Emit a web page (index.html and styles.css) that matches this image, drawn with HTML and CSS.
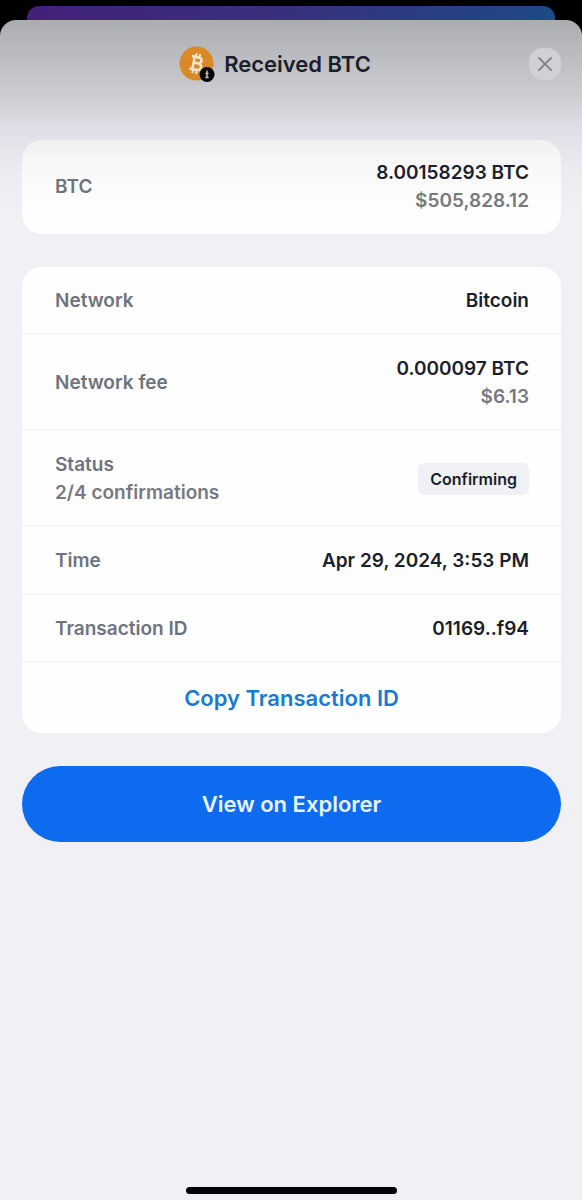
FILE: index.html
```html
<!DOCTYPE html>
<html lang="en">
<head>
<meta charset="utf-8">
<meta name="viewport" content="width=device-width, initial-scale=1">
<title>Received BTC</title>
<link rel="stylesheet" href="styles.css">
</head>
<body>
<div class="backdrop" aria-hidden="true"></div>
<main class="sheet">
  <header class="header">
    <div class="title">
      <svg class="coin" viewBox="0 0 36 36" aria-hidden="true">
        <circle cx="17.5" cy="17.5" r="17" fill="#d98a27"/>
        <g transform="rotate(12 17.5 17.5)" fill="none" stroke="#efe4cc" stroke-width="2.6">
          <path d="M14.5 11v13M11.5 11.2h7c4.600 0 4.600 5.800 0 5.800h-4M18.500 17c5.600 0 5.600 6.800 0 6.800h-7"/>
          <path d="M15.500 7.500v4M19.200 7.500v4M15.500 24v3.800M19.200 24v3.800" stroke-width="2"/>
        </g>
        <circle cx="28" cy="28.500" r="7.500" fill="#050608"/>
        <path d="M28 24.500v7M26.500 27.500h3M26.300 31.500h3.400" fill="none" stroke="#c9c9cb" stroke-width="1.400"/>
      </svg>
      <h1 class="title-text">Received BTC</h1>
    </div>
    <button class="close" type="button" aria-label="Close">
      <svg class="close-icon" viewBox="0 0 14 14" aria-hidden="true"><path d="M1 1l12 12M13 1L1 13"/></svg>
    </button>
  </header>

  <dl class="card card-amount">
    <div class="row">
      <dt class="label">BTC</dt>
      <dd class="value">8.00158293 BTC<span class="sub">$505,828.12</span></dd>
    </div>
  </dl>

  <section class="card">
    <dl class="list">
      <div class="row">
        <dt class="label">Network</dt>
        <dd class="value">Bitcoin</dd>
      </div>
      <div class="row">
        <dt class="label">Network fee</dt>
        <dd class="value">0.000097 BTC<span class="sub">$6.13</span></dd>
      </div>
      <div class="row">
        <dt class="label">Status<span class="sub">2/4 confirmations</span></dt>
        <dd class="value"><span class="badge">Confirming</span></dd>
      </div>
      <div class="row">
        <dt class="label">Time</dt>
        <dd class="value">Apr 29, 2024, 3:53 PM</dd>
      </div>
      <div class="row">
        <dt class="label">Transaction ID</dt>
        <dd class="value">01169..f94</dd>
      </div>
    </dl>
    <button class="copy" type="button">Copy Transaction ID</button>
  </section>

  <button class="explore" type="button">View on Explorer</button>
  <div class="home" aria-hidden="true"></div>
</main>
</body>
</html>
```
FILE: styles.css
```css
* {
  box-sizing: border-box;
}

body {
  margin: 0;
  min-height: 100vh;
  display: flex;
  flex-direction: column;
  padding-top: 6px;
  background: #000;
  color: #1b1e2b;
  font-family: Inter, "Liberation Sans", sans-serif;
  font-size: 19px;
  font-weight: 600;
  line-height: 28px;
}

button {
  border: 0;
  margin: 0;
  font: inherit;
  cursor: pointer;
}

.backdrop {
  height: 14px;
  margin: 0 27px;
  border-radius: 12px 12px 0 0;
  background: linear-gradient(90deg, #43207a, #37317c 50%, #1d4a86);
}

.sheet {
  flex: 1;
  display: flex;
  flex-direction: column;
  padding: 0 21px 6px 22px;
  border-radius: 16px 16px 0 0;
  background: #f0f0f5 linear-gradient(#acadb1, #bdbec2 40px, #cdcdd1 75px, #e1e0e8 112px, #ebebf0 150px, #f0f0f5 200px) no-repeat;
}

.header {
  display: grid;
  grid-template-columns: 32px 1fr 32px;
  align-items: center;
  height: 88px;
  margin-bottom: 32px;
}

.title {
  grid-column: 2;
  display: flex;
  justify-content: center;
  align-items: center;
  gap: 9px;
  margin-right: 33px;
}

.coin {
  width: 36px;
  height: 36px;
}

.title-text {
  margin: 0;
  font-size: 22px;
  font-weight: 600;
}

.close {
  display: grid;
  place-items: center;
  width: 32px;
  height: 32px;
  padding: 0;
  border-radius: 14px;
  background: #d1d1d3;
}

.close-icon {
  width: 14px;
  height: 14px;
  fill: none;
  stroke: #85858f;
  stroke-width: 2;
  stroke-linecap: round;
}

.card {
  margin: 0 0 33px;
  border-radius: 20px;
  background: #fefefe;
  overflow: hidden;
}

.card-amount {
  background: linear-gradient(#f1f1f1, #fafafa 36px, #fefefe 80px);
}

.list {
  margin: 0;
}

.row {
  display: flex;
  justify-content: space-between;
  align-items: center;
  padding: 19px 32px 19px 33px;
}

.list .row {
  padding-top: 20px;
  padding-bottom: 18px;
  border-bottom: 2px solid #f5f5f7;
}

.label {
  color: #6e737e;
}

.value {
  margin: 0;
  text-align: right;
}

.sub {
  display: block;
  color: #77797f;
}

.badge {
  display: block;
  padding: 2px 12px;
  border-radius: 6px;
  background: #f0f1f5;
  font-size: 16px;
}

.copy {
  display: block;
  width: 100%;
  padding: 21px 16px;
  background: transparent;
  color: #1b79d2;
  font-size: 22px;
}

.explore {
  width: 100%;
  padding: 24px 16px;
  border-radius: 40px;
  background: #0d6bf0;
  color: #e9f3ff;
  font-size: 22px;
}

.home {
  align-self: center;
  width: 39%;
  height: 7px;
  margin-top: auto;
  border-radius: 4px;
  background: #020207;
}
```
